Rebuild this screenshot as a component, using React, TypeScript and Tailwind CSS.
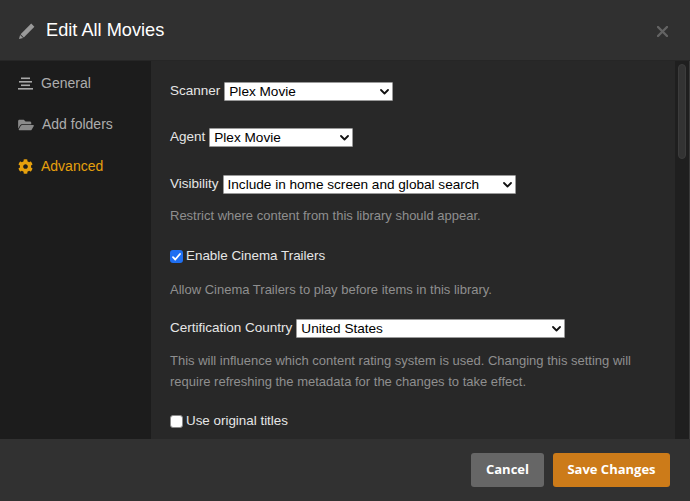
import { FaCog, FaFolderOpen } from "react-icons/fa";

const font = { fontFamily: '"Liberation Sans", Arial, sans-serif' };

function Chevron() {
  return (
    <svg width="9" height="6" viewBox="0 0 9 6" className="shrink-0">
      <path d="M1 1l3.5 3.5L8 1" fill="none" stroke="#111" strokeWidth="1.8" strokeLinecap="round" strokeLinejoin="round" />
    </svg>
  );
}

function Select({ value, width }: { value: string; width: string }) {
  return (
    <div className={`${width} h-[19px] bg-white border border-[#9a9a9a] rounded-[1px] flex items-center justify-between pl-[4px] pr-[3px] text-[13.6px] text-black leading-none`}>
      <span>{value}</span>
      <Chevron />
    </div>
  );
}

function Field({ label, value, width }: { label: string; value: string; width: string }) {
  return (
    <div className="flex items-center h-[19px] gap-[4px]">
      <span className="text-[13.5px] text-[#e6e6e6]">{label}</span>
      <Select value={value} width={width} />
    </div>
  );
}

function Checkbox({ checked, label }: { checked?: boolean; label: string }) {
  return (
    <div className="flex items-center h-[19px] gap-[3px]">
      {checked ? (
        <div className="w-[13px] h-[13px] rounded-[3px] bg-[#1f6ff2] flex items-center justify-center">
          <svg width="9" height="8" viewBox="0 0 9 8">
            <path d="M1 4.2l2.3 2.3L8 1" fill="none" stroke="#fff" strokeWidth="1.8" strokeLinecap="round" strokeLinejoin="round" />
          </svg>
        </div>
      ) : (
        <div className="w-[13px] h-[13px] rounded-[3px] bg-white border border-[#8a8a8a]" />
      )}
      <span className="text-[13.4px] text-[#e6e6e6]">{label}</span>
    </div>
  );
}

function Desc({ children }: { children: React.ReactNode }) {
  return <p className="text-[13px] leading-[21px] text-[#8f8f8f]">{children}</p>;
}

function GeneralIcon() {
  return (
    <svg width="15" height="13" viewBox="0 0 15 13">
      <rect x="3" y="0.5" width="9" height="1.6" fill="#a8a8a8" />
      <rect x="1" y="4" width="13" height="1.6" fill="#a8a8a8" />
      <rect x="3" y="7.5" width="9" height="1.6" fill="#a8a8a8" />
      <rect x="0" y="11" width="15" height="1.6" fill="#a8a8a8" />
    </svg>
  );
}

function PencilIcon() {
  return (
    <svg width="18" height="18" viewBox="0 0 18 18">
      <path d="M13.2 1.6l3.2 3.2-10.6 10.6-3.2-3.2z" fill="#9a9a9a" />
      <path d="M2.1 12.9l3 3-4.1 1.1z" fill="#9a9a9a" />
    </svg>
  );
}

export default function App() {
  return (
    <div className="w-[690px] h-[501px] bg-[#2a2a2a] flex flex-col overflow-hidden" style={font}>
      <div className="h-[61px] bg-[#303030] border-b border-[#262626] flex items-center pl-[18px] pr-[22px] pt-[2px] shrink-0">
        <PencilIcon />
        <h1 className="ml-[10px] text-[18.2px] text-white">Edit All Movies</h1>
        <span className="ml-auto">
          <svg width="11" height="11" viewBox="0 0 11 11">
            <path d="M1 1l9 9M10 1l-9 9" stroke="#636363" strokeWidth="2.4" strokeLinecap="round" />
          </svg>
        </span>
      </div>

      <div className="flex flex-1 min-h-0">
        <div className="w-[151px] bg-[#1c1c1c] shrink-0 flex flex-col pt-[1.5px] text-[14px]">
          <div className="h-[41.5px] flex items-center pl-[18px] gap-[8px] text-[#adadad]">
            <span className="w-[15px] flex justify-center"><GeneralIcon /></span>
            General
          </div>
          <div className="h-[41.5px] flex items-center pl-[18px] gap-[8px] text-[#adadad]">
            <FaFolderOpen className="w-[16px] h-[14px] text-[#8a8a8a]" />
            Add folders
          </div>
          <div className="h-[41.5px] flex items-center pl-[18px] gap-[8px] text-[#e5a00d]">
            <FaCog className="w-[15px] h-[15px]" />
            Advanced
          </div>
        </div>

        <div className="flex-1 bg-[#282828] pt-[21px] pl-[19px] flex flex-col">
          <Field label="Scanner" value="Plex Movie" width="w-[169px]" />
          <div className="mt-[27px]"><Field label="Agent" value="Plex Movie" width="w-[144px]" /></div>
          <div className="mt-[28px]"><Field label="Visibility" value="Include in home screen and global search" width="w-[293px]" /></div>
          <div className="mt-[11px]"><Desc>Restrict where content from this library should appear.</Desc></div>
          <div className="mt-[21px]"><Checkbox checked label="Enable Cinema Trailers" /></div>
          <div className="mt-[13px]"><Desc>Allow Cinema Trailers to play before items in this library.</Desc></div>
          <div className="mt-[19px]"><Field label="Certification Country" value="United States" width="w-[269px]" /></div>
          <div className="mt-[12px] w-[480px]">
            <Desc>This will influence which content rating system is used. Changing this setting will require refreshing the metadata for the changes to take effect.</Desc>
          </div>
          <div className="mt-[20px]"><Checkbox label="Use original titles" /></div>
        </div>

        <div className="w-[14px] bg-[#1f1f1f] shrink-0 pt-[3px] flex justify-center">
          <div className="w-[8px] h-[95px] rounded-full bg-[#333333] border border-[#3c3c3c]" />
        </div>
        <div className="w-[1px] bg-[#3a3a3a] shrink-0" />
      </div>

      <div className="h-[62px] bg-[#313131] flex items-center justify-end gap-[9px] pr-[20px] shrink-0">
        <button className="h-[34px] w-[73px] rounded-[3px] bg-[#666666] text-white text-[13px] font-bold" style={{ fontFamily: '"Open Sans", sans-serif' }}>
          Cancel
        </button>
        <button className="h-[34px] w-[117px] rounded-[3px] bg-[#cc7b19] text-white text-[13px] font-bold" style={{ fontFamily: '"Open Sans", sans-serif' }}>
          Save Changes
        </button>
      </div>
    </div>
  );
}
